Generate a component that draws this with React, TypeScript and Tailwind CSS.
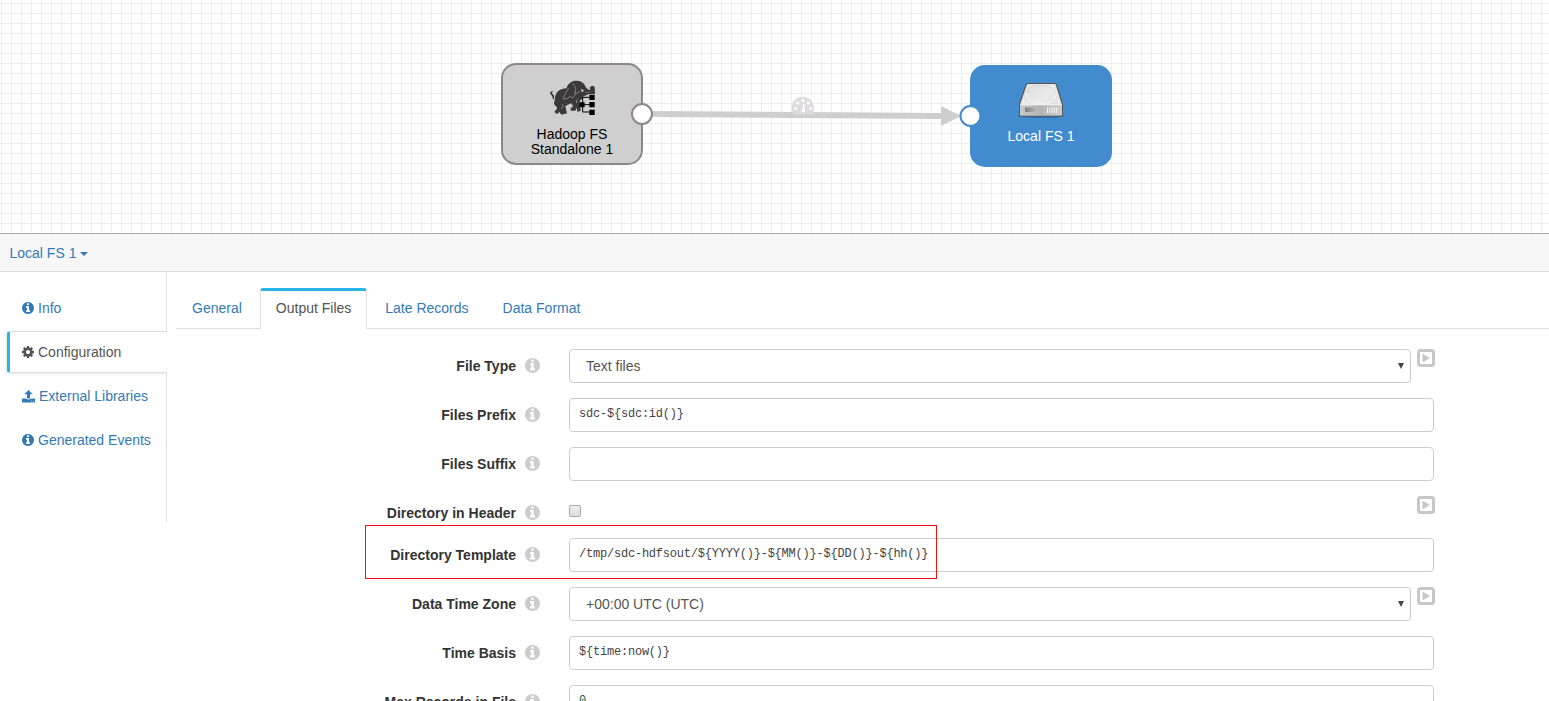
import React from "react";

function InfoIcon({ className }: { className: string }) {
  return (
    <svg viewBox="0 0 1536 1536" className={className} fill="currentColor">
      <path d="M1024 1248v-160q0-14-9-23t-23-9h-96V544q0-14-9-23t-23-9H544q-14 0-23 9t-9 23v160q0 14 9 23t23 9h96v320h-96q-14 0-23 9t-9 23v160q0 14 9 23t23 9h448q14 0 23-9t9-23zM896 352V192q0-14-9-23t-23-9H672q-14 0-23 9t-9 23v160q0 14 9 23t23 9h192q14 0 23-9t9-23zM1536 768q0 209-103 385.500T1153.500 1433 768 1536t-385.500-103T103 1153.500 0 768t103-385.500T382.500 103 768 0t385.500 103T1433 382.500 1536 768z" />
    </svg>
  );
}

function CogIcon() {
  return (
    <svg viewBox="0 0 1536 1536" className="h-3 w-3 shrink-0" fill="currentColor">
      <path d="M1024 768q0-106-75-181t-181-75-181 75-75 181 75 181 181 75 181-75 75-181zm512-109v222q0 12-8 23t-20 13l-185 28q-19 54-39 91 35 50 107 138 10 12 10 25t-9 23q-27 37-99 108t-94 71q-12 0-26-9l-138-108q-44 23-91 38-16 136-29 186-7 28-36 28H657q-14 0-24.500-8.500T621 1506l-28-184q-49-16-90-37l-141 107q-10 9-25 9-14 0-25-11-126-114-165-168-7-10-7-23 0-12 8-23 15-21 51-66.500t54-70.500q-27-50-41-99L29 913q-13-2-21-12.500T0 877V655q0-12 8-23t19-13l186-28q14-46 39-92-40-57-107-138-10-12-10-24 0-10 9-23 26-36 98.500-107.500T337 135q13 0 26 10l138 107q44-23 91-38 16-136 29-186 7-28 36-28h222q14 0 24.500 8.500T915 30l28 184q49 16 90 37l142-107q9-9 24-9 13 0 25 10 129 119 165 170 7 8 7 22 0 12-8 23-15 21-51 66.500t-54 70.500q26 50 41 98l183 28q13 2 21 12.500t8 23.500z" />
    </svg>
  );
}

function UploadIcon() {
  return (
    <svg viewBox="0 0 13 13" className="h-[13px] w-[13px] shrink-0" fill="currentColor">
      <path d="M6.5 0 10.600 4.300H8V8.400H5V4.300H2.400Z" />
      <path fillRule="evenodd" d="M.6 8.500H4.100Q4.400 9.600 6.500 9.600T8.900 8.500H12.400Q13 8.500 13 9.100V11.900Q13 12.500 12.400 12.500H.6Q0 12.500 0 11.900V9.100Q0 8.500.6 8.500ZM9 10.800h.8v.8H9ZM11 10.800h.8v.8h-.8Z" />
    </svg>
  );
}

function PlayToggle() {
  return (
    <svg viewBox="0 0 18 18" className="h-[18px] w-[18px] shrink-0">
      <rect x="1.500" y="1.500" width="15" height="15" rx="2" fill="none" stroke="#c8c6c8" strokeWidth="3" />
      <path d="M5.500 4.500 12.800 9 5.500 13.500Z" fill="#c8c6c8" />
    </svg>
  );
}

function Elephant() {
  return (
    <svg viewBox="0 0 168 132" className="absolute left-[42px] top-[11px] h-[44px] w-[56px]">
      <g fill="#3b3939">
        <path d="M22 46Q13 47 16 54Q24 59 23 68L27 70Q30 57 20 51L25 46Z" />
        <path d="M30 67C31 47 46 38 64 37C69 21 82 13 96 14C110 14 119 23 122 33C126 39 131 42 136 42L134 35Q142 24 149 33L150 54H132L118 60L105 54L98 66L93 77L98 90L91 104L77 104L77 96L85 90L78 82C70 86 66 88 61 91L66 112L49 116L43 108L36 114L28 108L37 96L27 84Z" />
        <path d="M100 54H119L113 66L104 75L107 104L98 108L93 88Z" />
      </g>
      <path d="M70 36C66 49 54 58 56 69Q68 71 75 61Q84 70 89 58C95 43 92 27 82 23M88 49Q99 57 104 44M48 99Q57 93 53 84M79 83l4 12" fill="none" stroke="#a5a3a3" strokeWidth="2" />
      <path d="M108 38l9 6-6 5Z" fill="#e0e0e0" />
      <path d="M120 48q9 5 16 0" fill="none" stroke="#8f8d8d" strokeWidth="1.500" />
      <path d="M134 64H113V108H134M104 86H134" fill="none" stroke="#000" strokeWidth="3" />
      <path d="M133 56h16v16h-16ZM133 78h16v16h-16ZM133 101h16v16h-16ZM104 79h15v15h-15Z" fill="#000" />
    </svg>
  );
}

function Drive() {
  return (
    <svg viewBox="0 0 46 38" className="absolute left-[48px] top-[16px] h-[38px] w-[46px]">
      <defs>
        <linearGradient id="top" x1="0" y1="0" x2="1" y2="1">
          <stop offset="0" stopColor="#dcdcdc" />
          <stop offset=".5" stopColor="#eaeaea" />
          <stop offset="1" stopColor="#d6d6d6" />
        </linearGradient>
        <linearGradient id="front" x1="0" y1="0" x2="1" y2="0">
          <stop offset="0" stopColor="#c9c9c9" />
          <stop offset=".5" stopColor="#b4b4b4" />
          <stop offset="1" stopColor="#cfcfcf" />
        </linearGradient>
        <linearGradient id="slot" x1="0" y1="0" x2="1" y2="0">
          <stop offset="0" stopColor="#7c7c7c" />
          <stop offset="1" stopColor="#b4b4b4" />
        </linearGradient>
      </defs>
      <ellipse cx="23" cy="35" rx="23" ry="2" fill="#275b87" opacity=".55" />
      <path d="M10 2.500H36.500Q38 2.500 38.500 4L44.400 23V34Q44.400 35 43 35H3Q1.600 35 1.600 34V23L8 4Q8.500 2.500 10 2.500Z" fill="url(#top)" stroke="#555753" strokeWidth="1.200" />
      <path d="M2.300 24.200H43.800V34.300H2.300Z" fill="url(#front)" />
      <path d="M2.300 23.700H43.800" stroke="#f4f4f4" strokeWidth=".7" />
      <path d="M9 12C4 24 39 27 38 13" fill="none" stroke="#f8f8f8" strokeWidth="1" />
      <path d="M9 12C10 2 36 2 38 13" fill="none" stroke="#d5d5d5" strokeWidth=".8" />
      <path d="M7 26.500H17.500V31H7Z" fill="url(#slot)" />
      <path d="M29.500 26.500V32M31.800 26.500V32M34.100 26.500V32M36.400 26.500V32M38.700 26.500V32" stroke="#f5f5f5" strokeWidth="1" />
      <circle cx="5.500" cy="21" r="1" fill="#f8f8f8" />
      <circle cx="40.500" cy="21" r="1" fill="#f8f8f8" />
    </svg>
  );
}

function Canvas() {
  return (
    <section className="relative h-[234px] shrink-0 overflow-hidden border-b border-[#aaa] bg-white bg-[linear-gradient(to_right,#eeeeee_1px,transparent_1px),linear-gradient(to_bottom,#eeeeee_1px,transparent_1px)] bg-[length:10px_10px] bg-[position:1px_3px]">
      <div className="absolute left-[501px] top-[63px] h-[102px] w-[142px] rounded-[15px] border-2 border-[#8d8787] bg-[#cfcfcf]">
        <Elephant />
        <p className="pt-[62px] text-center text-sm leading-[15px] text-black">Hadoop FS<br />Standalone 1</p>
      </div>
      <div className="absolute left-[970px] top-[65px] h-[102px] w-[142px] rounded-[15px] bg-[#428bce]">
        <Drive />
        <p className="pt-[64px] text-center text-sm leading-[15px] text-white">Local FS 1</p>
      </div>
      <svg className="absolute left-0 top-0 h-[233px] w-[1549px]">
        <path d="M652 114L942 116" stroke="#cecece" strokeWidth="6" />
        <path d="M941 106V126L961 116Z" fill="#cecece" />
        <circle cx="642" cy="114" r="10" fill="#fff" stroke="#8d8787" strokeWidth="2" />
        <circle cx="970.500" cy="116" r="10" fill="#fff" stroke="#428bce" strokeWidth="2" />
        <path d="M793.500 114.500Q791.500 111 791.700 108A11 11 0 0 1 814 108Q814.200 111 812.200 114.500Z" fill="#dedbdf" />
        <g fill="#fff">
          <circle cx="795.500" cy="108.500" r="1.500" />
          <circle cx="797.700" cy="103" r="1.500" />
          <circle cx="803" cy="100.700" r="1.500" />
          <circle cx="808.300" cy="103" r="1.500" />
          <circle cx="810.500" cy="108.500" r="1.500" />
          <path d="M803.700 103.500h1l-.2 6q1 1.200.2 2.500-1.500 1.200-3 0-.8-1.500.6-2.700Z" />
        </g>
      </svg>
    </section>
  );
}

function Sidebar() {
  return (
    <nav className="flex h-[250px] w-[167px] shrink-0 flex-col text-sm text-[#337ab7]">
      <a className="flex h-[59px] items-center gap-1 border-r border-[#ddd] pl-[22px] pt-[13px]"><InfoIcon className="h-3 w-3" />Info</a>
      <a className="ml-[7px] flex h-[42px] items-center gap-1 rounded-l-[3px] border-y border-l-[3px] border-y-[#ddd] border-l-[#29b5e8] pl-3 text-[#555] shadow-[-1px_1px_3px_rgba(0,0,0,0.1)]"><CogIcon />Configuration</a>
      <a className="flex h-[45px] items-center gap-1 border-r border-[#ddd] pl-[22px] pt-px"><UploadIcon />External Libraries</a>
      <a className="flex h-[44px] items-center gap-1 border-r border-[#ddd] pl-[22px]"><InfoIcon className="h-3 w-3" />Generated Events</a>
      <div className="flex-1 border-r border-[#ddd]" />
    </nav>
  );
}

function Tabs() {
  return (
    <div className="flex h-[41px] shrink-0 gap-[2px] border-b border-[#ddd] text-sm leading-5 text-[#337ab7]">
      <a className="px-4 pt-[10px]">General</a>
      <a className="-mb-px rounded-t-[3px] border-x border-t-[3px] border-x-[#ddd] border-t-[#29b5e8] bg-white px-[15px] pt-[7px] text-[#555]">Output Files</a>
      <a className="px-4 pt-[10px]">Late Records</a>
      <a className="px-4 pt-[10px]">Data Format</a>
    </div>
  );
}

type RowProps = { label: string; short?: boolean; boxed?: boolean; children: React.ReactNode };

function Row({ label, short, boxed, children }: RowProps) {
  return (
    <div className={"relative flex shrink-0 " + (short ? "h-[27px]" : "h-[34px]")}>
      <div className="flex w-[373px] shrink-0 items-start justify-end gap-[9px]">
        <label className="pt-[7px] text-sm font-bold leading-5 text-[#333]">{label}</label>
        <InfoIcon className="mr-[9px] mt-[9px] h-[15px] w-[15px] text-[#ccc]" />
      </div>
      <div className="ml-[20px] flex flex-1 items-start">{children}</div>
      {boxed && <div className="absolute -top-[13px] left-[189px] h-[54px] w-[572px] border border-[#f01010]" />}
    </div>
  );
}

function Code({ value, numeric }: { value: string; numeric?: boolean }) {
  return (
    <div className={"h-[34px] w-[865px] whitespace-pre rounded border border-[#ccc] pl-[9px] pt-[5px] font-['Liberation_Mono',monospace] text-[12px] leading-5 tracking-[-0.215px] " + (numeric ? "text-[#116644]" : "text-[#444]")}>{value}</div>
  );
}

function Select({ value }: { value: string }) {
  return (
    <>
      <div className="mr-[5.500px] flex h-[34px] w-[842px] items-center justify-between rounded border border-[#ccc] pl-4 pr-[6px] text-sm text-[#555]">
        {value}
        <svg viewBox="0 0 6 6" className="h-[6px] w-[6px]"><path d="M0 0H6L3 6Z" fill="#444" /></svg>
      </div>
      <PlayToggle />
    </>
  );
}

export default function App() {
  return (
    <main className="flex h-[701px] w-[1549px] flex-col overflow-hidden bg-white font-['Liberation_Sans',Arial,sans-serif]">
      <Canvas />
      <header className="flex h-[38px] shrink-0 items-center border-b border-[#ddd] bg-[#f7f7f7] pl-[9.500px] text-sm text-[#337ab7]">
        Local FS 1
        <svg viewBox="0 0 8 4" className="ml-[3.500px] mt-[2px] h-1 w-2"><path d="M0 0H8L4 4Z" fill="currentColor" /></svg>
      </header>
      <div className="flex min-h-0 flex-1">
        <Sidebar />
        <div className="flex min-w-0 flex-1 flex-col pl-[9px] pt-[16px]">
          <Tabs />
          <div className="flex flex-col gap-[15px] pt-5">
            <Row label="File Type"><Select value="Text files" /></Row>
            <Row label="Files Prefix"><Code value="sdc-${sdc:id()}" /></Row>
            <Row label="Files Suffix"><Code value="" /></Row>
            <Row label="Directory in Header" short>
              <div className="mr-[835.500px] mt-[9px] h-3 w-3 rounded-[2px] border border-[#aaa] bg-linear-to-b from-[#efefef] to-[#dcdcdc]" />
              <PlayToggle />
            </Row>
            <Row label="Directory Template" boxed><Code value="/tmp/sdc-hdfsout/${YYYY()}-${MM()}-${DD()}-${hh()}" /></Row>
            <Row label="Data Time Zone"><Select value="+00:00 UTC (UTC)" /></Row>
            <Row label="Time Basis"><Code value="${time:now()}" /></Row>
            <Row label="Max Records in File"><Code value="0" numeric /></Row>
          </div>
        </div>
      </div>
    </main>
  );
}
